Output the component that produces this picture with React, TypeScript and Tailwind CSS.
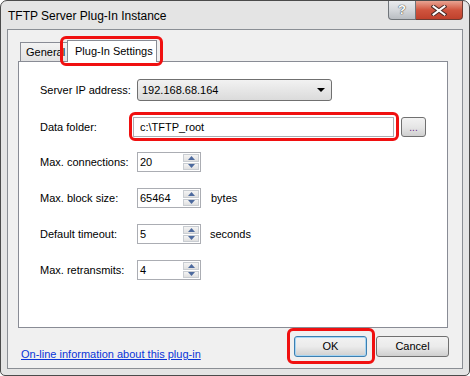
import React from "react";

function Spin({ value }: { value: string }) {
  return (
    <div className="flex h-[20px] w-[64px] border border-[#abadb3] bg-white">
      <div className="flex-1 pl-[2px] leading-[18px]">{value}</div>
      <div className="my-px mr-px flex w-[16px] flex-col gap-px">
        <div className="flex flex-1 items-center justify-center border border-[#c9cdd2] bg-gradient-to-b from-[#f4f4f4] to-[#e0e0e0]">
          <svg width="7" height="4" viewBox="0 0 7 4"><path d="M0 4 L3.5 0 L7 4 Z" fill="#4d6a9e" /></svg>
        </div>
        <div className="flex flex-1 items-center justify-center border border-[#c9cdd2] bg-gradient-to-b from-[#f4f4f4] to-[#e0e0e0]">
          <svg width="7" height="4" viewBox="0 0 7 4"><path d="M0 0 L3.5 4 L7 0 Z" fill="#4d6a9e" /></svg>
        </div>
      </div>
    </div>
  );
}

function Row({ label, labelW, mt, children }: { label: string; labelW: string; mt: string; children: React.ReactNode }) {
  return (
    <div className={`flex items-center ${mt}`}>
      <div className={`${labelW} shrink-0`}>{label}</div>
      {children}
    </div>
  );
}

export default function App() {
  return (
    <div className="relative flex h-[376px] w-[470px] flex-col rounded-t-[7px] rounded-b-[5px] border border-[#4b4b4b] bg-[#e4e4e4] px-[6px] pb-[6px] font-['Liberation_Sans',Arial,sans-serif] text-[11px] text-black">
      {/* title bar */}
      <div className="flex h-[28px] items-start">
        <div className="pl-[1px] pt-[6px] text-[12px]">TFTP Server Plug-In Instance</div>
        <div className="ml-auto flex">
          <div className="flex h-[19px] w-[28px] items-center justify-center rounded-bl-[4px] border border-t-0 border-[#6f7479] bg-gradient-to-b from-[#e9ebee] via-[#d4d7db] to-[#b9bdc2] text-[13px] font-bold text-white [text-shadow:0_0_1px_#333,0_0_1px_#333]">
            ?
          </div>
          <div className="flex h-[19px] w-[47px] items-center justify-center rounded-br-[4px] border border-l-0 border-t-0 border-[#6f3b32] bg-gradient-to-b from-[#e8a392] via-[#d0543e] to-[#c0412c]">
            <svg width="16" height="11" viewBox="0 0 16 11">
              <path d="M2.5 1.5 L13.5 9.5 M13.5 1.5 L2.5 9.5" stroke="#4a2b26" strokeWidth="4" strokeLinecap="square" />
              <path d="M2.5 1.5 L13.5 9.5 M13.5 1.5 L2.5 9.5" stroke="#ffffff" strokeWidth="2" strokeLinecap="square" />
            </svg>
          </div>
        </div>
      </div>

      {/* client area */}
      <div className="flex flex-1 flex-col border border-[#8a8e94] bg-[#f0f0f0]">
        {/* tabs */}
        <div className="ml-[12px] mt-[10px] flex items-end">
          <div className="relative h-[19px] w-[48px] border border-b-0 border-[#898c95] bg-gradient-to-b from-[#f3f3f3] to-[#e2e2e2] pl-[5px] leading-[18px]">
            General
          </div>
          <div className="relative z-10 -ml-[1px] -mb-px h-[22px] w-[90px] border border-b-0 border-[#898c95] bg-white pl-[7px] pt-[2px]">
            Plug-In Settings
          </div>
        </div>

        {/* panel */}
        <div className="ml-[10px] mr-[14px] flex h-[267px] flex-col border border-[#898c95] bg-white pl-[21px] pt-[17px]">
          <Row label="Server IP address:" labelW="w-[97px]" mt="mt-0">
            <div className="flex h-[22px] w-[195px] items-center rounded-[3px] border border-[#707070] bg-gradient-to-b from-[#f2f2f2] to-[#dbdbdb] pl-[4px]">
              <span>192.168.68.164</span>
              <svg className="ml-auto mr-[6px]" width="8" height="4" viewBox="0 0 8 4"><path d="M0 0 L8 0 L4 4 Z" fill="#000" /></svg>
            </div>
          </Row>
          <Row label="Data folder:" labelW="w-[93px]" mt="mt-[16px]">
            <div className="h-[20px] w-[261px] border border-[#abadb3] bg-white pl-[6px] leading-[18px]">c:\TFTP_root</div>
            <div className="ml-[7px] flex h-[20px] w-[25px] items-center justify-center rounded-[3px] border border-[#707070] bg-gradient-to-b from-[#f2f2f2] via-[#e6e6e6] to-[#d0d0d0] pt-[1px] text-[10px] text-[#6a2c8a]">
              ...
            </div>
          </Row>
          <Row label="Max. connections:" labelW="w-[97px]" mt="mt-[15px]">
            <Spin value="20" />
          </Row>
          <Row label="Max. block size:" labelW="w-[97px]" mt="mt-[16px]">
            <Spin value="65464" />
            <span className="ml-[10px]">bytes</span>
          </Row>
          <Row label="Default timeout:" labelW="w-[97px]" mt="mt-[16px]">
            <Spin value="5" />
            <span className="ml-[9px]">seconds</span>
          </Row>
          <Row label="Max. retransmits:" labelW="w-[97px]" mt="mt-[16px]">
            <Spin value="4" />
          </Row>
        </div>

        {/* bottom */}
        <div className="mt-[8px] flex items-start pl-[13px] pr-[13px]">
          <a className="mt-[10px] text-[#0a34d8] underline">On-line information about this plug-in</a>
          <div className="ml-auto flex gap-[9px]">
            <div className="flex h-[21px] w-[73px] items-center justify-center rounded-[3px] border border-[#3c7fb1] bg-gradient-to-b from-[#f2f2f2] via-[#ebebeb] to-[#cfcfcf] shadow-[inset_0_0_0_1px_#a6d5f3]">
              OK
            </div>
            <div className="flex h-[21px] w-[73px] items-center justify-center rounded-[3px] border border-[#707070] bg-gradient-to-b from-[#f2f2f2] via-[#ebebeb] to-[#cfcfcf]">
              Cancel
            </div>
          </div>
        </div>
      </div>

      {/* red highlight overlays */}
      <div className="pointer-events-none absolute left-[59px] top-[35px] h-[30px] w-[103px] rounded-[6px] border-[3px] border-[#f01010]" />
      <div className="pointer-events-none absolute left-[128px] top-[111px] h-[29px] w-[270px] rounded-[6px] border-[3px] border-[#f01010]" />
      <div className="pointer-events-none absolute left-[286px] top-[327px] h-[36px] w-[88px] rounded-[6px] border-[3px] border-[#f01010]" />
    </div>
  );
}
